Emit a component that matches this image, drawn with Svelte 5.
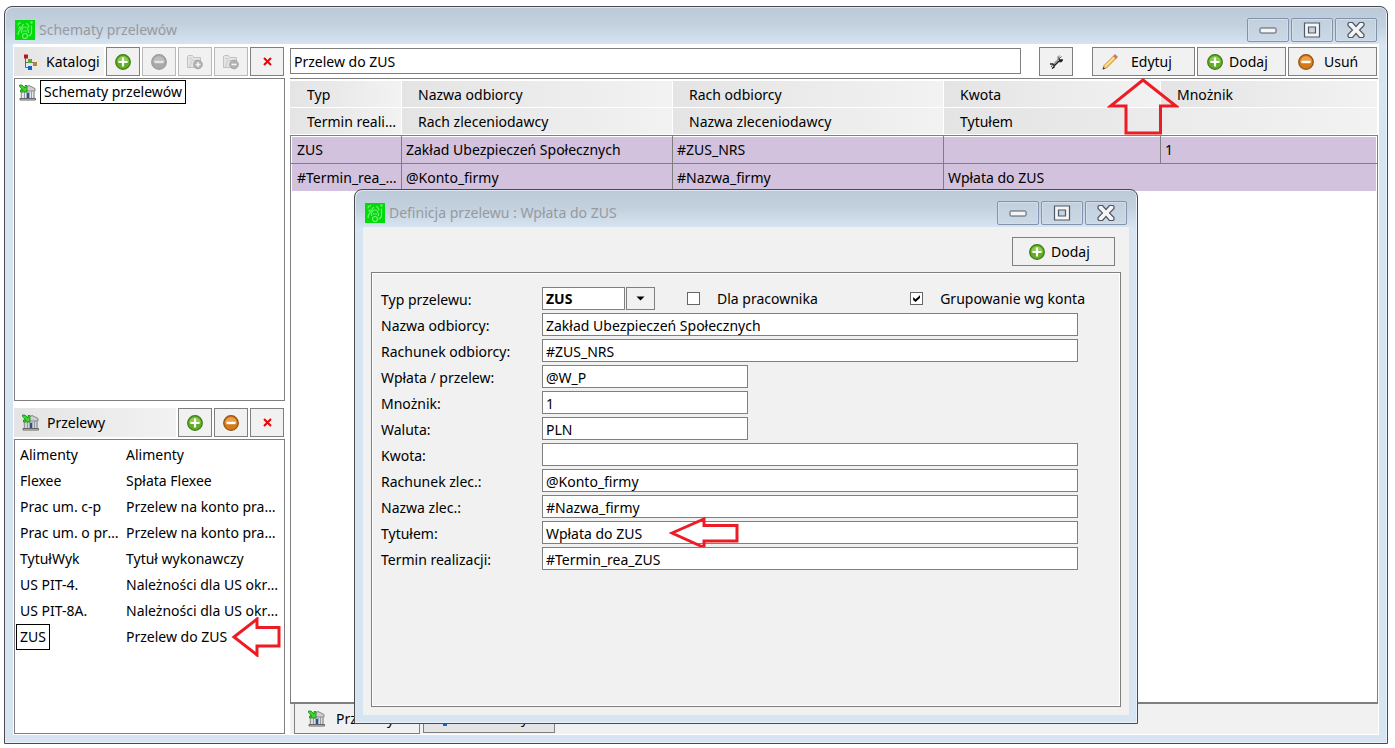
<script>
  const transfers = [
    ['Alimenty', 'Alimenty'],
    ['Flexee', 'Spłata Flexee'],
    ['Prac um. c-p', 'Przelew na konto pracownika'],
    ['Prac um. o pracę', 'Przelew na konto pracownika'],
    ['TytułWyk', 'Tytuł wykonawczy'],
    ['US PIT-4.', 'Należności dla US określone'],
    ['US PIT-8A.', 'Należności dla US określone'],
    ['ZUS', 'Przelew do ZUS'],
  ];
  let selected = $state('ZUS');
  let search = $state('Przelew do ZUS');
  let type = $state('ZUS');
  let forEmployee = $state(false);
  let grouped = $state(true);

  let fields = $state([
    { id: 'recipient', label: 'Nazwa odbiorcy:', value: 'Zakład Ubezpieczeń Społecznych' },
    { id: 'account', label: 'Rachunek odbiorcy:', value: '#ZUS_NRS' },
    { id: 'payment', label: 'Wpłata / przelew:', value: '@W_P', short: true },
    { id: 'factor', label: 'Mnożnik:', value: '1', short: true },
    { id: 'currency', label: 'Waluta:', value: 'PLN', short: true },
    { id: 'amount', label: 'Kwota:', value: '' },
    { id: 'payerAccount', label: 'Rachunek zlec.:', value: '@Konto_firmy' },
    { id: 'payerName', label: 'Nazwa zlec.:', value: '#Nazwa_firmy' },
    { id: 'title', label: 'Tytułem:', value: 'Wpłata do ZUS', marked: true },
    { id: 'dueDate', label: 'Termin realizacji:', value: '#Termin_rea_ZUS' },
  ]);
</script>

{#snippet logo()}
  <svg width="20" height="20" viewBox="0 0 20 20" aria-hidden="true">
    <rect width="20" height="20" fill="#00dc0a" />
    <g fill="none" stroke="#74ee74" stroke-width="1.200">
      <path d="M3 5.500c0-2 1.500-3 3-2.500M3.500 8.500l2-2M3 15c0-4 2-5 3.500-7l2-4" />
      <path d="M6.500 13c0-4 1.500-6 3.500-6s3.500 2 3.500 6M8 11h4" />
      <path d="M11 3.500c2 0 2.500 2 3 4M16.500 5.500v6c0 2-1 4-3 4.500" />
      <circle cx="10" cy="16" r="2.500" />
      <circle cx="16.500" cy="2.500" r="0.600" />
    </g>
  </svg>
{/snippet}

{#snippet plus()}
  <svg width="16" height="16" viewBox="0 0 16 16" aria-hidden="true">
    <circle cx="8" cy="8" r="7.3" fill="#62ad25" stroke="#3d7a14" stroke-width="1.2" />
    <path d="M2.2 8a5.8 5.8 0 0 1 11.6 0c-3 1.500-8 1.500-11.600 0z" fill="#8dcc52" />
    <path d="M8 3.500v9M3.500 8h9" stroke="#fff" stroke-width="2.200" />
  </svg>
{/snippet}

{#snippet minus(off)}
  <svg width="16" height="16" viewBox="0 0 16 16" aria-hidden="true">
    <circle cx="8" cy="8" r="7.3" fill={off ? '#a9a9a9' : '#d47a1c'} stroke={off ? '#9a9a9a' : '#94500d'} stroke-width="1.2" />
    <path d="M2.2 8a5.8 5.8 0 0 1 11.6 0c-3 1.500-8 1.500-11.600 0z" fill={off ? '#bdbdbd' : '#eda04c'} />
    <path d="M3.500 8h9" stroke={off ? '#e6e6e6' : '#fff'} stroke-width="2.400" />
  </svg>
{/snippet}

{#snippet folder(sign)}
  <svg width="18" height="16" viewBox="0 0 18 16" aria-hidden="true">
    <path d="M1.500 13.500v-11l1-1h4l1.500 2h6.500v10z" fill="#e4e4e4" stroke="#c2c2c2" />
    <path d="M3.500 4.500h3M5.500 6.500h8M3.500 13l2-6" fill="none" stroke="#cacaca" />
    <circle cx="12" cy="10.500" r="4.300" fill="#b2b2b2" stroke="#a2a2a2" />
    <path d={sign === '+' ? 'M12 8v5M9.500 10.500h5' : 'M9.500 10.500h5'} stroke="#f4f4f4" stroke-width="1.600" />
  </svg>
{/snippet}

{#snippet cross()}
  <svg width="9" height="9" viewBox="0 0 9 9" aria-hidden="true">
    <path d="M1 1l7 7M8 1l-7 7" stroke="#f00000" stroke-width="2" />
  </svg>
{/snippet}

{#snippet tree()}
  <svg width="16" height="16" viewBox="0 0 16 16" aria-hidden="true">
    <path d="M3.500 4v9.500h5M3.500 8.500h9" fill="none" stroke="#666" />
    <rect x="2" y="0.500" width="4" height="4" fill="#c01818" />
    <rect x="6" y="5" width="4" height="4" fill="#58a832" />
    <rect x="11" y="8" width="4" height="4" fill="#c47a38" />
    <rect x="6" y="12" width="4" height="4" fill="#1566c0" />
  </svg>
{/snippet}

{#snippet bank()}
  <svg width="17" height="17" viewBox="0 0 17 17" aria-hidden="true">
    <path d="M6 3.500l4-2 6 3v2.500h-14v-1.500z" fill="#cfcfcf" stroke="#868686" />
    <path d="M2.500 7v7M5.500 7v7M12.500 7v7M15 7v7" stroke="#9a9a9a" stroke-width="1.500" />
    <rect x="7" y="7.500" width="4" height="7" fill="#9fb0cc" />
    <rect x="8" y="9" width="2" height="5.500" fill="#33507c" />
    <path d="M1 14.500h15.500v1.500h-15.500z" fill="#dcdcdc" stroke="#666" stroke-width="1" />
    <path d="M0.500 1h2.500l3 3v-2.500h2v6.500h-6.500v-1.800h2.500l-3.500-3.700z" fill="#3fd62a" stroke="#128a14" stroke-width="0.800" />
  </svg>
{/snippet}

{#snippet controls()}
  <div class="controls">
    <button class="chrome" aria-label="Minimalizuj">
      <svg width="18" height="16" viewBox="0 0 18 16"><rect x="1" y="6" width="16" height="5" rx="1" fill="#f5f5f5" stroke="#505868" /></svg>
    </button>
    <button class="chrome" aria-label="Maksymalizuj">
      <svg width="18" height="16" viewBox="0 0 18 16">
        <path d="M1.500 1h15v14h-15zM5.500 5v6h7v-6z" fill="#f5f5f5" fill-rule="evenodd" stroke="#505868" stroke-width="1.200" />
      </svg>
    </button>
    <button class="chrome" aria-label="Zamknij">
      <svg width="18" height="16" viewBox="0 0 18 16">
        <path d="M1 1.500l1-1h3.500l3.500 4 3.500-4h3.500l1 1v2l-4.500 4.500 4.500 4.500v2l-1 1h-3.500l-3.500-4-3.500 4h-3.500l-1-1v-2l4.500-4.500-4.500-4.500z" fill="#f5f5f5" stroke="#505868" stroke-width="1.200" />
      </svg>
    </button>
  </div>
{/snippet}

<main class="desktop">
  <section class="window">
    <header class="titlebar">{@render logo()}<h1>Schematy przelewów</h1>{@render controls()}</header>

    <div class="body split">
      <aside class="side">
        <div class="bar">
          <div class="caption">{@render tree()}<span>Katalogi</span></div>
          <button class="tool" aria-label="Dodaj katalog">{@render plus()}</button>
          <button class="tool" aria-label="Usuń katalog" disabled>{@render minus(true)}</button>
          <button class="tool" aria-label="Rozwiń katalogi" disabled>{@render folder('+')}</button>
          <button class="tool" aria-label="Zwiń katalogi" disabled>{@render folder('-')}</button>
          <button class="tool" aria-label="Zamknij katalogi">{@render cross()}</button>
        </div>
        <div class="panel catalog">
          <div class="node">{@render bank()}<span>Schematy przelewów</span></div>
        </div>
        <div class="bar second">
          <div class="caption">{@render bank()}<span>Przelewy</span></div>
          <button class="tool" aria-label="Dodaj przelew">{@render plus()}</button>
          <button class="tool" aria-label="Usuń przelew">{@render minus(false)}</button>
          <button class="tool" aria-label="Zamknij przelewy">{@render cross()}</button>
        </div>
        <ul class="panel list">
          {#each transfers as [code, name]}
            <li>
              <button class="entry" onclick={() => (selected = code)}>
                <span class="code"><span class:current={selected === code}>{code}</span></span>
                <span class="name">{name}</span>
              </button>
              {#if code === 'ZUS'}
                <svg class="mark mark-list" width="50" height="40" viewBox="0 0 50 40" aria-hidden="true">
                  <path d="M3 20l23-18v8.500h22v18.500h-22v9z" />
                </svg>
              {/if}
            </li>
          {/each}
        </ul>
      </aside>

      <div class="content">
        <div class="bar main-bar">
          <input class="search" aria-label="Opis przelewu" bind:value={search} />
          <button class="tool wrench" aria-label="Ustawienia">
            <svg width="14" height="14" viewBox="0 0 14 14" aria-hidden="true">
              <path d="M2 12l2-2.500M5 9l4-4M10 4l2.500-2.500" stroke="#555" stroke-width="1" />
              <path d="M1 9h3l1 1v2l-2 1.500M9.500 1.500v2.500l1 1h3l-1.500 1.500h-2.500l-4.500 4.500" fill="none" stroke="#222" stroke-width="1.500" />
              <path d="M4.500 9l4.500-4.500v-2.500l2-1.500" fill="none" stroke="#aaa" stroke-width="1.300" />
            </svg>
          </button>
          <div class="edit-holder">
            <button class="tool edit">
              <svg width="16" height="16" viewBox="0 0 16 16" aria-hidden="true">
                <path d="M2 11.500l9.500-9.500 2.500 2.500-9.500 9.500-3.500 1.200z" fill="#f5c55c" stroke="#b9852a" stroke-width="0.800" />
                <path d="M3 12.500l9.500-9.500" stroke="#fde7a8" stroke-width="1.200" />
                <path d="M11.500 2l1.500-1.500 2.500 2.500-1.500 1.500z" fill="#d9706c" stroke="#8d6a66" stroke-width="0.600" />
                <path d="M0.500 15.500l0.900-2.600 1.700 1.700z" fill="#333" />
              </svg>
              <span>Edytuj</span>
            </button>
            <svg class="mark mark-edit" width="72" height="58" viewBox="0 0 72 58" aria-hidden="true">
              <path d="M36 3l33 26h-15.500v27h-34.500v-27h-15.500z" />
            </svg>
          </div>
          <button class="tool add">{@render plus()}<span>Dodaj</span></button>
          <button class="tool remove">{@render minus(false)}<span>Usuń</span></button>
        </div>

        <table>
          <colgroup><col class="c1" /><col class="c2" /><col class="c3" /><col class="c4" /><col /></colgroup>
          <thead>
            <tr><th>Typ</th><th>Nazwa odbiorcy</th><th>Rach odbiorcy</th><th>Kwota</th><th>Mnożnik</th></tr>
            <tr><th>Termin realizacji</th><th>Rach zleceniodawcy</th><th>Nazwa zleceniodawcy</th><th colspan="2">Tytułem</th></tr>
          </thead>
          <tbody>
            <tr><td>ZUS</td><td>Zakład Ubezpieczeń Społecznych</td><td>#ZUS_NRS</td><td></td><td>1</td></tr>
            <tr><td>#Termin_rea_ZUS</td><td>@Konto_firmy</td><td>#Nazwa_firmy</td><td colspan="2">Wpłata do ZUS</td></tr>
          </tbody>
        </table>
        <div class="canvas"></div>
        <nav class="tabs">
          <button class="tab active">{@render bank()}<span>Przelewy</span></button>
          <button class="tab">{@render tree()}<span>Schematy</span></button>
        </nav>
      </div>
    </div>
  </section>

  <section class="window dialog">
    <header class="titlebar">{@render logo()}<h2>Definicja przelewu : Wpłata do ZUS</h2>{@render controls()}</header>
    <div class="body form-body">
      <button class="tool dialog-add">{@render plus()}<span>Dodaj</span></button>
      <form class="group">
        <div class="field">
          <label for="type">Typ przelewu:</label>
          <select id="type" bind:value={type}><option>ZUS</option></select>
          <button type="button" class="drop" aria-label="Rozwiń typy">
            <svg width="9" height="5" viewBox="0 0 9 5"><path d="M0.500 0.500h8l-4 4z" /></svg>
          </button>
          <label class="check first"><input type="checkbox" bind:checked={forEmployee} />Dla pracownika</label>
          <label class="check"><input type="checkbox" bind:checked={grouped} />Grupowanie wg konta</label>
        </div>
        {#each fields as field}
          <div class="field">
            <label for={field.id}>{field.label}</label>
            <input id={field.id} class:short={field.short} bind:value={field.value} />
            {#if field.marked}
              <svg class="mark mark-field" width="70" height="34" viewBox="0 0 70 34" aria-hidden="true">
                <path d="M3 17l32-14v6.500h33v15.500h-33v6.500z" />
              </svg>
            {/if}
          </div>
        {/each}
      </form>
    </div>
  </section>
</main>

<style>
  :global(body) { background: #fff; }
  .desktop, .desktop * { box-sizing: border-box; }
  .desktop {
    position: relative;
    display: flex;
    min-height: 100vh;
    padding: 6px 7px 4px 4px;
    font: 14px/20px "Noto Sans", "Open Sans", sans-serif;
    color: #000;
  }
  button, input, select { font: inherit; color: inherit; margin: 0; border-radius: 0; }
  svg { flex: none; display: block; }

  .window {
    flex: 1;
    min-width: 0;
    display: flex;
    flex-direction: column;
    padding: 0 8px 8px;
    border: 1px solid #4a4a50;
    border-radius: 8px 8px 0 0;
    background: linear-gradient(#bccad8, #c3d0de 18px, #d7e4f2 38px, #d7e4f1 39px);
    box-shadow: inset -1px -1px #eaf1f8, inset 1px 1px #dde7f1;
  }
  .titlebar {
    flex: none;
    display: flex;
    align-items: center;
    gap: 4px;
    height: 37px;
    padding: 8px 2px 0 2px;
  }
  h1, h2 { flex: 1; margin: 0; font-size: 14px; font-weight: 400; color: #969a9f; }
  .controls { display: flex; gap: 2px; }
  .chrome {
    display: grid;
    place-items: center;
    width: 42px;
    height: 24px;
    padding: 0;
    border: 1px solid #8493ad;
    border-radius: 2px;
    background: linear-gradient(#c2cfdd, #cbd8e6);
    box-shadow: inset 0 0 0 1px #d3deea;
  }
  .body { flex: 1; min-height: 0; display: flex; background: #fff; }
  .split { padding: 3px 1px 1px 1px; gap: 5px; }

  .side { width: 271px; display: flex; flex-direction: column; }
  .bar { flex: none; display: flex; gap: 2px; height: 29px; padding-right: 1px; margin-bottom: 2px; }
  .second { margin-top: 7px; }
  .caption {
    flex: 1;
    display: flex;
    align-items: center;
    gap: 8px;
    padding-left: 8px;
    background: linear-gradient(90deg, #e4e4e4, #f2f2f2);
    white-space: nowrap;
  }
  .tool {
    flex: none;
    display: flex;
    align-items: center;
    justify-content: center;
    width: 34px;
    height: 29px;
    padding: 0;
    border: 1px solid #7f7f7f;
    background: #f1f1f1;
  }
  .tool:disabled { border-color: #b9b9b9; }
  .panel { margin: 0; border: 1px solid #7f7f7f; background: #fff; }
  .catalog { flex: 319 1 0; padding: 1px 4px; }
  .list { flex: 289 1 0; padding: 2px 1px; list-style: none; }
  .node { display: flex; align-items: center; gap: 4px; }
  .node span { border: 1px solid #000; padding: 1px 3px; white-space: nowrap; }
  .list li { position: relative; }
  .entry {
    display: flex;
    align-items: center;
    width: 100%;
    height: 26px;
    padding: 0;
    border: 0;
    background: none;
    text-align: left;
  }
  .code, .name { overflow: hidden; text-overflow: ellipsis; white-space: nowrap; }
  .code { flex: none; width: 106px; padding-right: 2px; }
  .code span { padding: 0 4px; }
  .code .current { display: inline-block; padding: 2px 3px; border: 1px solid #000; }
  .name { flex: 1; padding: 0 4px; }

  .content { flex: 1; min-width: 0; display: flex; flex-direction: column; }
  .main-bar { padding-right: 1px; }
  .search { flex: 1; min-width: 0; height: 26px; margin-top: 1px; padding: 0 3px; border: 1px solid #7f7f7f; }
  .wrench { margin: 0 17px 0 16px; }
  .edit-holder { position: relative; }
  .edit, .add, .remove { justify-content: flex-start; padding-left: 9px; }
  .edit { width: 103px; gap: 13px; }
  .add { width: 89px; gap: 6px; }
  .remove { width: 89px; gap: 10px; }

  table {
    width: 100%;
    table-layout: fixed;
    border-collapse: separate;
    border-spacing: 0;
    border-top: 1px solid #7f7f7f;
    padding-top: 2px;
  }
  .c1 { width: 112px; }
  .c2, .c3 { width: 271px; }
  .c4 { width: 217px; }
  th, td {
    height: 27px;
    padding: 1px 4px 0 16px;
    text-align: left;
    font-weight: 400;
    overflow: hidden;
    text-overflow: ellipsis;
    white-space: nowrap;
  }
  th {
    border-right: 1px solid #fff;
    border-bottom: 1px solid #fff;
    background: linear-gradient(90deg, #e4e4e4, #f2f2f2);
  }
  th:first-child { padding-left: 17px; }
  td { padding-left: 4px; border-right: 1px solid #7f7f7f; background: #d3c2dd; }
  td:first-child { border-left: 1px solid #7f7f7f; padding-left: 6px; box-shadow: inset 1px 0 #fff; }
  td:last-child { box-shadow: inset -1px 0 #fff; }
  tbody tr:first-child td {
    border-top: 1px solid #7f7f7f;
    border-bottom: 1px solid #7f7f7f;
    height: 29px;
    box-shadow: inset 0 1px #fff;
  }
  tbody tr:first-child td:first-child { box-shadow: inset 1px 1px #fff; }
  tbody tr:first-child td:last-child { box-shadow: inset -1px 1px #fff; }
  .canvas { flex: 1; border: 1px solid #7f7f7f; border-top: 0; border-bottom-width: 2px; }
  .tabs { flex: none; display: flex; gap: 3px; height: 30px; padding-left: 4px; background: #f1f1f1; }
  .tab {
    display: flex;
    align-items: center;
    gap: 11px;
    width: 132px;
    height: 29px;
    padding: 0 0 0 13px;
    border: 1px solid #7f7f7f;
    border-top: 0;
    background: #e4e4e4;
  }
  .tab.active { width: 126px; height: 30px; background: #f1f1f1; }

  .dialog {
    position: absolute;
    left: 354px;
    right: 257px;
    top: 189px;
    bottom: 24px;
  }
  .form-body { flex-direction: column; padding: 10px 8px 8px; background: #f1f1f1; }
  .dialog-add { align-self: flex-end; justify-content: flex-start; width: 103px; gap: 6px; margin-right: 6px; padding-left: 16px; }
  .group {
    flex: 1;
    display: flex;
    flex-direction: column;
    gap: 3px;
    margin-top: 6px;
    padding: 14px 42px 14px 9px;
    border: 1px solid #7f7f7f;
    box-shadow: inset 0 0 0 1px #fff;
  }
  .field { position: relative; display: flex; height: 23px; align-items: center; }
  .field > label:first-child { flex: none; width: 161px; padding-top: 2px; white-space: nowrap; }
  .field > input { flex: 1; min-width: 0; height: 23px; padding: 1px 3px 0; border: 1px solid #7f7f7f; background: #fff; }
  .field > input.short { flex: none; width: 206px; }
  select {
    appearance: none;
    width: 83px;
    height: 23px;
    padding: 0 3px;
    border: 1px solid #7f7f7f;
    background: #fff;
    font-weight: 700;
  }
  .drop {
    display: grid;
    place-items: center;
    width: 29px;
    height: 23px;
    margin-left: 1px;
    padding: 0;
    border: 1px solid #7f7f7f;
    background: #f1f1f1;
  }
  .check { display: flex; align-items: center; gap: 17px; white-space: nowrap; margin-left: auto; }
  .check.first { margin-left: 32px; }
  .check:last-child { margin-right: -7px; }
  .check input {
    appearance: none;
    display: grid;
    place-items: center;
    width: 13px;
    height: 13px;
    border: 1px solid #666;
    background: #fff;
  }
  .check input:checked::after {
    content: "";
    width: 7px;
    height: 7px;
    background: #000;
    clip-path: polygon(0 30%, 35% 62%, 100% 0, 100% 38%, 35% 100%, 0 70%);
  }

  /* Red pointers that lie over the controls they refer to */
  .mark { position: absolute; fill: none; stroke: #ed1c24; stroke-width: 3px; pointer-events: none; }
  .mark-edit { left: 15px; top: 30px; }
  .mark-list { left: 215px; top: -7px; }
  .mark-field { left: 288px; top: -5px; }
</style>
